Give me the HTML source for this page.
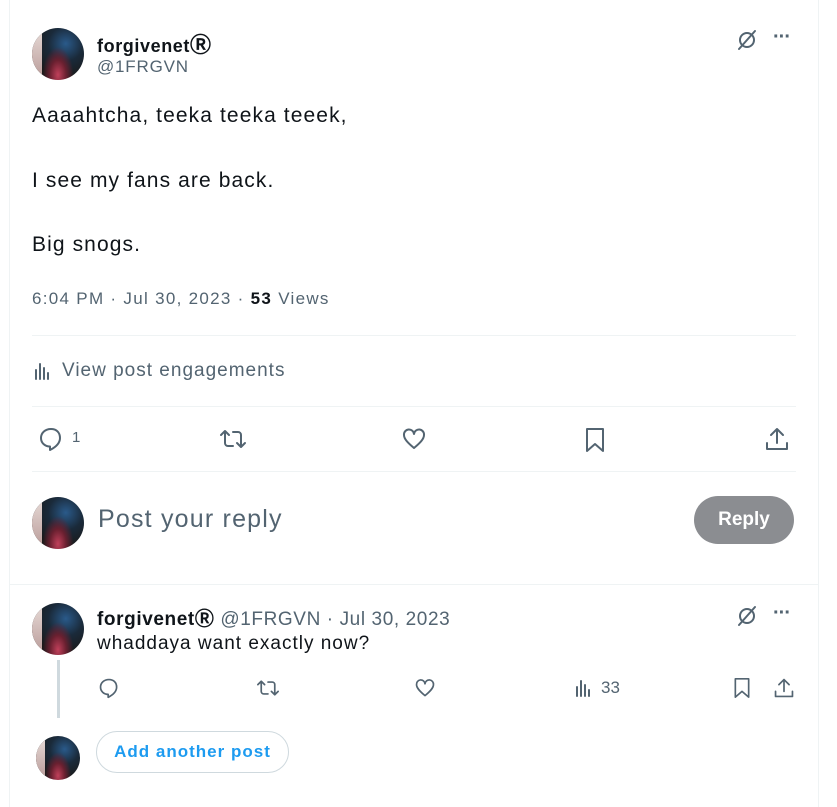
<!DOCTYPE html>
<html><head><style>
body{margin:0;width:837px;height:807px;background:#fff;font-family:"Liberation Sans",sans-serif;color:#0f1419;position:relative;overflow:hidden}
.a{position:absolute;white-space:nowrap}
.av{position:absolute;border-radius:50%;background:radial-gradient(ellipse at 50% 90%,#c0405a 0%,#6a2030 22%,transparent 42%),radial-gradient(circle at 65% 30%,#2a5a8a 0%,#1a2a3a 35%,#1a1a1a 70%),#222;overflow:hidden}
.av::after{content:"";position:absolute;left:0;top:0;width:20%;height:100%;background:linear-gradient(#e8dcd8,#b89a98)}
.ic{position:absolute;fill:none;stroke:#536471;stroke-width:2;stroke-linecap:round;stroke-linejoin:round}
.hr{position:absolute;left:32px;width:764px;height:1px;background:#eff3f4}
.g{color:#536471}
</style></head><body>
<div class="a" style="left:9px;top:0;width:1px;height:807px;background:#eff3f4"></div>
<div class="a" style="left:818px;top:0;width:1px;height:807px;background:#eff3f4"></div>

<div class="av" style="left:32px;top:28px;width:52px;height:52px"></div>
<div class="a" style="left:97px;top:29px;font-size:18px;font-weight:bold;letter-spacing:0.6px">forgivenet<span style="font-size:21px">&#9415;</span></div>
<div class="a g" style="left:97px;top:57px;font-size:17px;letter-spacing:0.8px">@1FRGVN</div>
<svg class="ic" style="left:736px;top:29px" width="22" height="22" viewBox="0 0 22 22"><circle cx="11" cy="11" r="7"/><path d="M3 20L19 2"/></svg>
<div class="a" style="left:773px;top:26px;font-size:20px;font-weight:bold;color:#536471;letter-spacing:-1px">···</div>

<div class="a" style="left:32px;top:104px;font-size:21px;letter-spacing:1.1px">Aaaahtcha, teeka teeka teeek,</div>
<div class="a" style="left:32px;top:169px;font-size:21px;letter-spacing:1.1px">I see my fans are back.</div>
<div class="a" style="left:32px;top:233px;font-size:21px;letter-spacing:1.1px">Big snogs.</div>
<div class="a g" style="left:32px;top:289px;font-size:17px;letter-spacing:1.3px">6:04 PM · Jul 30, 2023 · <b style="color:#0f1419">53</b> Views</div>
<div class="hr" style="top:335px"></div>
<svg class="ic" style="left:33px;top:361px" width="20" height="20" viewBox="0 0 20 20"><path d="M3 18V9M7 18V3M11 18V7M15 18V12" stroke-width="2"/></svg>
<div class="a g" style="left:62px;top:360px;font-size:19px;letter-spacing:1px">View post engagements</div>
<div class="hr" style="top:406px"></div>

<svg class="ic" style="left:38px;top:426px" width="26" height="26" viewBox="0 0 26 26"><path d="M13 3C7 3 3 7 3 12c0 5 4 8.5 9 8.5v3.5c5-2.5 10-6.5 10-12S18.5 3 13 3z"/></svg>
<div class="a g" style="left:72px;top:429px;font-size:15px">1</div>
<svg class="ic" style="left:219px;top:426px" width="28" height="26" viewBox="0 0 28 26"><path d="M6 5v12a3 3 0 0 0 3 3h5M2 9l4-4 4 4M22 21V9a3 3 0 0 0-3-3h-5M26 17l-4 4-4-4"/></svg>
<svg class="ic" style="left:401px;top:426px" width="26" height="26" viewBox="0 0 26 26"><path d="M13 22C7 17 3 13 3 9a5 5 0 0 1 10-1 5 5 0 0 1 10 1c0 4-4 8-10 13z"/></svg>
<svg class="ic" style="left:583px;top:426px" width="24" height="28" viewBox="0 0 24 28"><path d="M4 3h16v22l-8-7-8 7z"/></svg>
<svg class="ic" style="left:764px;top:426px" width="26" height="26" viewBox="0 0 26 26"><path d="M13 3v14M7 9l6-6 6 6M3 17v6h20v-6"/></svg>
<div class="hr" style="top:471px"></div>

<div class="av" style="left:32px;top:497px;width:52px;height:52px"></div>
<div class="a g" style="left:98px;top:505px;font-size:25px;letter-spacing:1.2px">Post your reply</div>
<div class="a" style="left:694px;top:496px;width:100px;height:48px;border-radius:24px;background:#8b8d91;color:#fff;font-weight:bold;font-size:19px;text-align:center;line-height:48px">Reply</div>
<div class="a" style="left:9px;top:584px;width:810px;height:1px;background:#eff3f4"></div>

<div class="av" style="left:32px;top:603px;width:52px;height:52px"></div>
<div class="a" style="left:57px;top:660px;width:3px;height:58px;background:#cfd9de"></div>
<div class="a" style="left:97px;top:604px;font-size:19px;letter-spacing:0.6px"><b>forgivenet&#9415;</b> <span class="g">@1FRGVN · Jul 30, 2023</span></div>
<svg class="ic" style="left:736px;top:605px" width="22" height="22" viewBox="0 0 22 22"><circle cx="11" cy="11" r="7"/><path d="M3 20L19 2"/></svg>
<div class="a" style="left:773px;top:602px;font-size:20px;font-weight:bold;color:#536471;letter-spacing:-1px">···</div>
<div class="a" style="left:97px;top:633px;font-size:19px;letter-spacing:1px">whaddaya want exactly now?</div>

<svg class="ic" style="left:98px;top:677px" width="22" height="22" viewBox="0 0 26 26"><path d="M13 3C7 3 3 7 3 12c0 5 4 8.5 9 8.5v3.5c5-2.5 10-6.5 10-12S18.5 3 13 3z"/></svg>
<svg class="ic" style="left:256px;top:677px" width="24" height="22" viewBox="0 0 28 26"><path d="M6 5v12a3 3 0 0 0 3 3h5M2 9l4-4 4 4M22 21V9a3 3 0 0 0-3-3h-5M26 17l-4 4-4-4"/></svg>
<svg class="ic" style="left:414px;top:677px" width="22" height="22" viewBox="0 0 26 26"><path d="M13 22C7 17 3 13 3 9a5 5 0 0 1 10-1 5 5 0 0 1 10 1c0 4-4 8-10 13z"/></svg>
<svg class="ic" style="left:574px;top:678px" width="20" height="20" viewBox="0 0 20 20"><path d="M3 18V9M7 18V3M11 18V7M15 18V12"/></svg>
<div class="a g" style="left:601px;top:678px;font-size:17px">33</div>
<svg class="ic" style="left:732px;top:676px" width="20" height="24" viewBox="0 0 24 28"><path d="M4 3h16v22l-8-7-8 7z"/></svg>
<svg class="ic" style="left:773px;top:677px" width="22" height="22" viewBox="0 0 26 26"><path d="M13 3v14M7 9l6-6 6 6M3 17v6h20v-6"/></svg>

<div class="av" style="left:36px;top:736px;width:44px;height:44px"></div>
<div class="a" style="left:96px;top:731px;width:191px;height:40px;border:1px solid #cfd9de;border-radius:21px;color:#1d9bf0;font-weight:bold;font-size:17px;text-align:center;line-height:40px;letter-spacing:1px">Add another post</div>
</body></html>
